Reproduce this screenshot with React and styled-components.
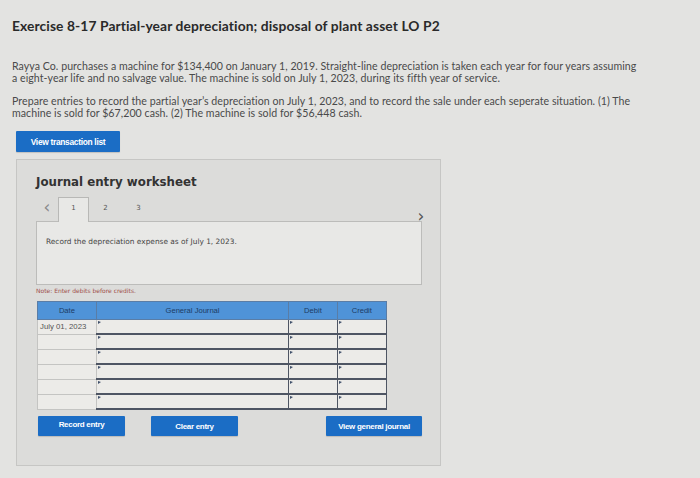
import React from "react";
import styled, { createGlobalStyle } from "styled-components";

const Global = createGlobalStyle`
  html, body { margin: 0; padding: 0; background: #e3e3e1; }
  body { width: 700px; height: 478px; overflow: hidden; }
`;

const Page = styled.div`
  padding: 17px 12px 0 12px;
  font-family: Roboto, "Liberation Sans", sans-serif;
  color: #333;
`;

const Title = styled.h1`
  margin: 0;
  font-family: Lato, "Open Sans", sans-serif;
  font-weight: 700;
  font-size: 13.8px;
  color: #2a2a2a;
  letter-spacing: 0.1px;
`;

const Para = styled.p`
  margin: ${(p) => p.$top}px 0 0 0;
  font-family: Lato, Roboto, sans-serif;
  font-size: 10.6px;
  line-height: 11.5px;
  color: #4a4a4a;
  white-space: nowrap;
  letter-spacing: 0.05px;
`;

const BlueButton = styled.button`
  background: #1b6dc5;
  color: #fff;
  border: none;
  border-radius: 1px;
  font-family: "Liberation Sans", Arial, sans-serif;
  font-weight: 700;
  font-size: ${(p) => p.$fs || 8}px;
  letter-spacing: -0.3px;
  width: ${(p) => p.$w}px;
  height: ${(p) => p.$h || 20}px;
  padding: 0 0 ${(p) => p.$pb || 0}px 0;
  box-shadow: 0 1px 1px rgba(0, 0, 0, 0.15);
  display: flex;
  align-items: center;
  justify-content: center;
`;

const TopButtonWrap = styled.div`
  margin: 12px 0 0 4px;
`;

const Panel = styled.section`
  margin: 7px 0 0 4px;
  width: 404px;
  height: 290px;
  background: #dcdcda;
  border: 1px solid #c6c6c4;
  padding: 15px 0 0 19px;
  font-family: "DejaVu Sans", Verdana, sans-serif;
`;

const Heading = styled.h2`
  margin: 0;
  font-size: 11.8px;
  font-weight: 700;
  color: #333;
`;

const NavRow = styled.div`
  display: flex;
  align-items: flex-end;
  width: 396px;
  margin-top: 8px;
`;

const Arrow = styled.span`
  color: ${(p) => p.$c || "#8a8a8a"};
  font-size: 17px;
  line-height: 17px;
  width: 22px;
  text-align: center;
  margin-bottom: ${(p) => p.$mb || 0}px;
  font-family: "DejaVu Sans", sans-serif;
`;

const Tab = styled.div`
  width: ${(p) => (p.$active ? 31 : 33)}px;
  height: 25px;
  box-sizing: border-box;
  display: flex;
  align-items: center;
  justify-content: center;
  font-size: 7px;
  color: #555;
  padding-bottom: 5px;
  background: ${(p) => (p.$active ? "#e8e8e6" : "transparent")};
  border: ${(p) => (p.$active ? "1px solid #b8b8b6" : "1px solid transparent")};
  border-bottom: none;
  margin-bottom: -1px;
  position: relative;
  z-index: 1;
`;

const Spacer = styled.div`
  flex: 1;
`;

const ContentBox = styled.div`
  width: 386px;
  height: 64px;
  box-sizing: border-box;
  background: #e8e8e6;
  border: 1px solid #bcbcba;
  padding: 15px 9px;
  font-size: 7.4px;
  color: #444;
`;

const Note = styled.div`
  margin-top: 2px;
  font-size: 6px;
  color: #a0504c;
`;

const Table = styled.table`
  margin: 7px 0 0 1px;
  border-collapse: collapse;
  width: 350px;
  font-family: "Liberation Sans", Arial, sans-serif;
  font-size: 7.6px;
`;

const Th = styled.th`
  background: #4f93d8;
  color: #1d3c64;
  font-weight: 400;
  height: 17px;
  padding: 0;
  border: 1px solid #5a7da6;
  width: ${(p) => p.$w}px;
  vertical-align: middle;
`;

const Td = styled.td`
  height: 13px;
  padding: 0 2px;
  background: #ecebe8;
  border: ${(p) => (p.$date ? "1px solid #c4c4c2" : "1px solid #4e5563")};
  border-bottom-width: ${(p) => (p.$date ? 1 : 2)}px;
  color: #555;
  font-size: 7.8px;
  position: relative;
  white-space: nowrap;
`;

const Flag = styled.span`
  position: absolute;
  left: 1px;
  top: 1px;
  width: 0;
  height: 0;
  border-left: 3px solid #40506a;
  border-bottom: 2px solid transparent;
  border-top: 1px solid transparent;
`;

const ButtonRow = styled.div`
  display: flex;
  align-items: flex-start;
  margin: 6px 0 0 2px;
  width: 384px;
`;

const Gap = styled.div`
  width: ${(p) => p.$w}px;
`;

const rows = ["July 01, 2023", "", "", "", "", ""];

export default function App() {
  return (
    <>
      <Global />
      <Page>
        <Title>Exercise 8-17 Partial-year depreciation; disposal of plant asset LO P2</Title>
        <Para $top={27}>
          Rayya Co. purchases a machine for $134,400 on January 1, 2019. Straight-line depreciation is taken each year for four years assuming
          <br />
          a eight-year life and no salvage value. The machine is sold on July 1, 2023, during its fifth year of service.
        </Para>
        <Para $top={12}>
          Prepare entries to record the partial year’s depreciation on July 1, 2023, and to record the sale under each seperate situation. (1) The
          <br />
          machine is sold for $67,200 cash. (2) The machine is sold for $56,448 cash.
        </Para>
        <TopButtonWrap>
          <BlueButton $w={104} $h={21} $fs={8.4}>View transaction list</BlueButton>
        </TopButtonWrap>
        <Panel>
          <Heading>Journal entry worksheet</Heading>
          <NavRow>
            <Arrow $mb={5}>‹</Arrow>
            <Tab $active>1</Tab>
            <Tab>2</Tab>
            <Tab>3</Tab>
            <Spacer />
            <Arrow $c="#555" $mb={-4}>›</Arrow>
          </NavRow>
          <ContentBox>Record the depreciation expense as of July 1, 2023.</ContentBox>
          <Note>Note: Enter debits before credits.</Note>
          <Table>
            <thead>
              <tr>
                <Th $w={58}>Date</Th>
                <Th $w={195}>General Journal</Th>
                <Th $w={48}>Debit</Th>
                <Th $w={49}>Credit</Th>
              </tr>
            </thead>
            <tbody>
              {rows.map((d, i) => (
                <tr key={i}>
                  <Td $date>{d}</Td>
                  <Td><Flag /></Td>
                  <Td><Flag /></Td>
                  <Td><Flag /></Td>
                </tr>
              ))}
            </tbody>
          </Table>
          <ButtonRow>
            <BlueButton $w={87} $h={20} $pb={3}>Record entry</BlueButton>
            <Gap $w={26} />
            <BlueButton $w={87} $h={20}>Clear entry</BlueButton>
            <Spacer />
            <BlueButton $w={96} $h={20}>View general journal</BlueButton>
          </ButtonRow>
        </Panel>
      </Page>
    </>
  );
}
